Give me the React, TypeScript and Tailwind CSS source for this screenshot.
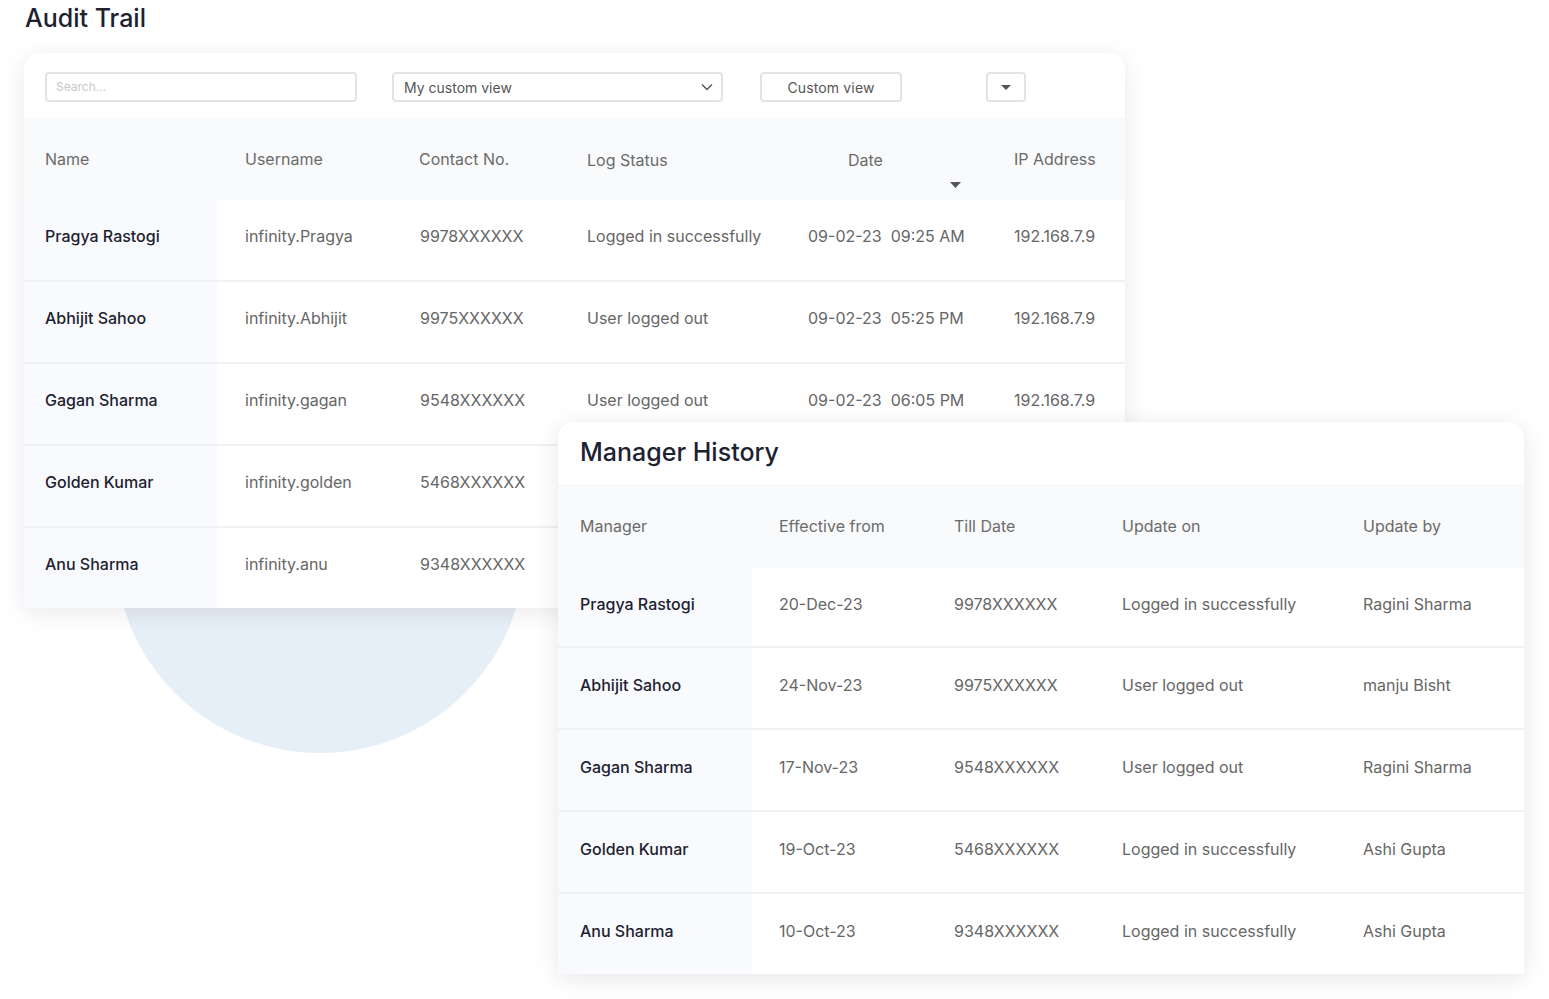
import React from 'react';

const font = { fontFamily: 'Inter, "Open Sans", sans-serif' };

const auditRows = [
  { name: 'Pragya Rastogi', user: 'infinity.Pragya', phone: '9978XXXXXX', status: 'Logged in successfully', date: '09-02-23  09:25 AM', ip: '192.168.7.9' },
  { name: 'Abhijit Sahoo', user: 'infinity.Abhijit', phone: '9975XXXXXX', status: 'User logged out', date: '09-02-23  05:25 PM', ip: '192.168.7.9' },
  { name: 'Gagan Sharma', user: 'infinity.gagan', phone: '9548XXXXXX', status: 'User logged out', date: '09-02-23  06:05 PM', ip: '192.168.7.9' },
  { name: 'Golden Kumar', user: 'infinity.golden', phone: '5468XXXXXX', status: 'Logged in successfully', date: '09-02-23  06:25 PM', ip: '192.168.7.9' },
  { name: 'Anu Sharma', user: 'infinity.anu', phone: '9348XXXXXX', status: 'User logged out', date: '09-02-23  07:05 PM', ip: '192.168.7.9' },
];

const managerRows = [
  { name: 'Pragya Rastogi', from: '20-Dec-23', till: '9978XXXXXX', on: 'Logged in successfully', by: 'Ragini Sharma' },
  { name: 'Abhijit Sahoo', from: '24-Nov-23', till: '9975XXXXXX', on: 'User logged out', by: 'manju Bisht' },
  { name: 'Gagan Sharma', from: '17-Nov-23', till: '9548XXXXXX', on: 'User logged out', by: 'Ragini Sharma' },
  { name: 'Golden Kumar', from: '19-Oct-23', till: '5468XXXXXX', on: 'Logged in successfully', by: 'Ashi Gupta' },
  { name: 'Anu Sharma', from: '10-Oct-23', till: '9348XXXXXX', on: 'Logged in successfully', by: 'Ashi Gupta' },
];

const Caret = () => (
  <svg width="11" height="6" viewBox="0 0 11 6">
    <path d="M0 0h11L5.5 6z" fill="#555" />
  </svg>
);

const AuditTrail: React.FC = () => (
  <div className="relative z-10 w-[1101px] bg-white rounded-t-2xl shadow-[0_4px_24px_rgba(0,0,0,0.09)]">
    {/* Toolbar */}
    <div className="h-[65px] flex items-start pt-[19px] pl-[21px] text-[14px]">
      <div className="w-[312px] h-[30px] border-2 border-[#e3e3e3] rounded flex items-center px-[9px] text-[12px] text-[#c9c9c9]">
        Search...
      </div>
      <div className="ml-[35px] w-[331px] h-[30px] border-2 border-[#e3e3e3] rounded flex items-center justify-between pl-[10px] pr-[8px] text-[#555]">
        <span>My custom view</span>
        <svg width="12" height="8" viewBox="0 0 12 8" fill="none" stroke="#555" strokeWidth="1.4">
          <path d="M1 1.5l5 5 5-5" />
        </svg>
      </div>
      <div className="ml-[37px] w-[142px] h-[30px] border-2 border-[#e3e3e3] rounded flex items-center justify-center text-[#555] tracking-[0.01em]">
        Custom view
      </div>
      <div className="ml-[84px] w-[40px] h-[30px] border-2 border-[#e3e3e3] rounded flex items-center justify-center">
        <svg width="10" height="5" viewBox="0 0 10 5">
          <path d="M0 0h10L5 5z" fill="#555" />
        </svg>
      </div>
    </div>

    {/* Header */}
    <div className="grid grid-cols-[193px_175px_168px_220px_206px_1fr] h-[82px] bg-[#f9fafc] items-center text-[16px] text-[#6b6b6b]">
      <div className="pl-[21px]">Name</div>
      <div className="pl-[28px]">Username</div>
      <div className="pl-[27px]">Contact No.</div>
      <div className="pl-[27px] pt-[2px]">Log Status</div>
      <div className="relative h-full flex items-center pl-[68px] pt-[2px]">
        Date
        <span className="absolute left-[170px] top-[64px] flex">
          <Caret />
        </span>
      </div>
      <div className="pl-[28px]">IP Address</div>
    </div>

    {/* Rows */}
    {auditRows.map((r, i) => (
      <div
        key={r.name}
        className={`grid grid-cols-[193px_175px_168px_220px_206px_1fr] items-stretch text-[16px] text-[#666] ${
          i < auditRows.length - 1 ? 'h-[82px] border-b-2 border-[#f0f1f3]' : 'h-[80px]'
        }`}
      >
        <div className="pl-[21px] pb-[9px] flex items-center bg-[#f9fafd] text-[#1d2230] font-medium">{r.name}</div>
        <div className="pl-[28px] pb-[9px] flex items-center">{r.user}</div>
        <div className="pl-[28px] pb-[9px] flex items-center">{r.phone}</div>
        <div className="pl-[27px] pb-[9px] flex items-center">{r.status}</div>
        <div className="pl-[28px] pb-[9px] flex items-center whitespace-pre">{r.date}</div>
        <div className="pl-[28px] pb-[9px] flex items-center">{r.ip}</div>
      </div>
    ))}
  </div>
);

const ManagerHistory: React.FC = () => (
  <div className="absolute left-[558px] top-[422px] z-20 w-[966px] bg-white rounded-t-2xl shadow-[0_4px_24px_rgba(0,0,0,0.10)]">
    <div className="h-[62px] flex items-center pl-[22px] text-[25px] text-[#1d2230] font-medium">Manager History</div>
    <div className="grid grid-cols-[194px_175px_168px_241px_1fr] h-[84px] bg-[#f9fafc] items-center text-[16px] text-[#6b6b6b]">
      <div className="pl-[22px]">Manager</div>
      <div className="pl-[27px]">Effective from</div>
      <div className="pl-[27px]">Till Date</div>
      <div className="pl-[27px]">Update on</div>
      <div className="pl-[27px]">Update by</div>
    </div>
    {managerRows.map((r, i) => (
      <div
        key={r.name}
        className={`grid grid-cols-[194px_175px_168px_241px_1fr] items-stretch text-[16px] text-[#666] ${
          i === 0 ? 'h-[80px] border-b-2 border-[#f0f1f3]' : i < managerRows.length - 1 ? 'h-[82px] border-b-2 border-[#f0f1f3]' : 'h-[80px]'
        }`}
      >
        <div className="pl-[22px] pb-[7px] flex items-center bg-[#f9fafd] text-[#1d2230] font-medium">{r.name}</div>
        <div className="pl-[27px] pb-[7px] flex items-center">{r.from}</div>
        <div className="pl-[27px] pb-[7px] flex items-center">{r.till}</div>
        <div className="pl-[27px] pb-[7px] flex items-center">{r.on}</div>
        <div className="pl-[27px] pb-[7px] flex items-center">{r.by}</div>
      </div>
    ))}
  </div>
);

export default function App() {
  return (
    <div className="relative w-[1549px] h-[999px] bg-white overflow-hidden" style={font}>
      <h1 className="pl-[25px] pt-[2px] h-[53px] text-[25px] text-[#1d2230] font-medium leading-[32px]">Audit Trail</h1>

      {/* decorative circle behind the audit card */}
      <div className="absolute left-[115px] top-[343px] w-[410px] h-[410px] rounded-full bg-[#e6eef8]" />

      <div className="pl-[24px]">
        <AuditTrail />
      </div>

      <ManagerHistory />
    </div>
  );
}
